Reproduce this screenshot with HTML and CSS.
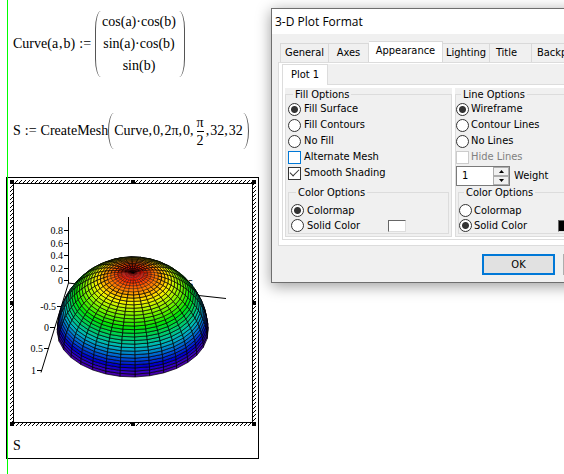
FILE: index.html
```html
<!DOCTYPE html>
<html lang="en">
<head>
<meta charset="utf-8">
<title>3-D Plot Format</title>
<link rel="stylesheet" href="styles.css">
</head>
<body>
<main class="sheet">
  <section class="math definition">
    <span>Curve(a<i class="sep">,</i>b)</span><span class="assign">:=</span>
    <span class="paren open"></span>
    <span class="vector"><span>cos(a)·cos(b)</span><span>sin(a)·cos(b)</span><span>sin(b)</span></span>
    <span class="paren close"></span>
  </section>
  <section class="math call">
    <span>S</span><span class="assign">:=</span><span class="name">CreateMesh</span>
    <span class="paren open"></span>
    <span class="args"><span>Curve</span><i class="sep">,</i><span>0</span><i class="sep">,</i><span>2π</span><i class="sep">,</i><span>0</span><i class="sep">,</i><span class="fraction"><span>π</span><span>2</span></span><i class="sep">,</i><span>32</span><i class="sep">,</i><span>32</span></span>
    <span class="paren close"></span>
  </section>
  <section class="plot">
    <div class="hatch">
      <svg class="chart" viewBox="14 184 238 238" role="img" aria-label="Surface plot of S">
        <g class="axes">
          <path d="M68.5 217V283L80 284.500M68.500 283L41 372.500M194 295L226 298.500"/>
          <path d="M64 230.500H68M64 243.500H68M64 255.500H68M64 268.500H68M64 280.500H68M57 306.500H61M50 327.500H55M44 348.500H49M37 370.500H42"/>
        </g>
        <g class="ticks">
          <text x="63" y="234">0.8</text><text x="63" y="247">0.6</text><text x="63" y="259">0.4</text><text x="63" y="272">0.2</text><text x="63" y="284">0</text>
          <text x="56" y="310">-0.5</text><text x="49" y="331">0</text><text x="43" y="352">0.5</text><text x="36" y="374">1</text><text x="193" y="287">5</text>
        </g>
        <g id="mesh" class="mesh"></g>
      </svg>
      <i class="handle tl"></i><i class="handle tc"></i><i class="handle tr"></i><i class="handle ml"></i><i class="handle mr"></i><i class="handle bl"></i><i class="handle bc"></i><i class="handle br"></i>
    </div>
    <div class="math caption">S</div>
  </section>
</main>

<section class="dialog" role="dialog" aria-labelledby="dialog-title">
  <h1 class="title" id="dialog-title">3-D Plot Format</h1>
  <nav class="tabs">
    <button class="tab general">General</button><button class="tab axes-tab">Axes</button><button class="tab active">Appearance</button><button class="tab lighting">Lighting</button><button class="tab title-tab">Title</button><button class="tab back">Backplanes</button>
  </nav>
  <div class="panel">
    <div class="subtabs"><button class="subtab">Plot 1</button></div>
    <form class="groups">
      <div class="card fill">
        <fieldset class="group">
          <legend>Fill Options</legend>
          <label class="option"><input type="radio" name="fill" checked>Fill Surface</label>
          <label class="option"><input type="radio" name="fill">Fill Contours</label>
          <label class="option"><input type="radio" name="fill">No Fill</label>
          <label class="option"><input type="checkbox" class="focus">Alternate Mesh</label>
          <label class="option"><input type="checkbox" checked>Smooth Shading</label>
          <fieldset class="group colors">
            <legend>Color Options</legend>
            <label class="option"><input type="radio" name="fillcolor" checked>Colormap</label>
            <div class="solid"><label class="option"><input type="radio" name="fillcolor">Solid Color</label><button type="button" class="swatch" aria-label="Fill color"></button></div>
          </fieldset>
        </fieldset>
      </div>
      <div class="card line">
        <fieldset class="group">
          <legend>Line Options</legend>
          <label class="option"><input type="radio" name="line" checked>Wireframe</label>
          <label class="option"><input type="radio" name="line">Contour Lines</label>
          <label class="option"><input type="radio" name="line">No Lines</label>
          <label class="option disabled"><input type="checkbox" disabled>Hide Lines</label>
          <div class="weight">
            <span class="spinner"><input type="text" id="weight" value="1"><span class="steps"><button type="button" aria-label="Increase"><svg viewBox="0 0 5 3"><path d="M0 3H5L2.500 0Z"/></svg></button><button type="button" aria-label="Decrease"><svg viewBox="0 0 5 3"><path d="M0 0H5L2.500 3Z"/></svg></button></span></span>
            <label for="weight">Weight</label>
          </div>
          <fieldset class="group colors">
            <legend>Color Options</legend>
            <label class="option"><input type="radio" name="linecolor">Colormap</label>
            <div class="solid"><label class="option"><input type="radio" name="linecolor" checked>Solid Color</label><button type="button" class="swatch black" aria-label="Line color"></button></div>
          </fieldset>
        </fieldset>
      </div>
    </form>
  </div>
  <footer class="actions"><button class="ok">OK</button><button class="cancel">Cancel</button></footer>
</section>
<script src="mesh.js"></script>
</body>
</html>
```
FILE: mesh.js
```js
// Tilted view of the hemisphere, 32 x 32 cells.
const steps = 32, radius = 75.5, cx = 132.7, cy = 331, tilt = 0.655, turn = 0.03, lift = 0.77;
const stops = [
  [0, 75, 0, 160], [0.06, 60, 0, 190], [0.17, 0, 0, 205], [0.3, 0, 95, 210],
  [0.43, 0, 185, 190], [0.55, 0, 205, 100], [0.65, 0, 225, 10], [0.74, 90, 240, 0],
  [0.83, 190, 245, 0], [0.88, 255, 240, 0], [0.93, 255, 160, 0], [0.97, 255, 85, 0], [1, 255, 0, 0]
];

function colorAt(z) {
  let i = 1;
  while (i < stops.length - 1 && stops[i][0] < z) i++;
  const a = stops[i - 1], b = stops[i], t = (z - a[0]) / (b[0] - a[0]);
  return "rgb(" + [1, 2, 3].map(k => Math.round(a[k] + (b[k] - a[k]) * t)).join(",") + ")";
}

function project(a, b) {
  const x = Math.sin(a) * Math.cos(b), y = Math.cos(a) * Math.cos(b), z = Math.sin(b);
  return [
    cx + radius * x,
    cy + radius * (y * Math.sin(tilt) - z * lift),
    y * Math.cos(tilt) + z * Math.sin(tilt)
  ];
}

const mesh = document.getElementById("mesh");
const da = 2 * Math.PI / steps, db = Math.PI / 2 / steps;
for (let j = 0; j < steps; j++) {
  for (let i = 0; i < steps; i++) {
    const a = i * da + turn, b = j * db;
    if (project(a + da / 2, b + db / 2)[2] < -0.03) continue;
    const corners = [[a, b], [a + da, b], [a + da, b + db], [a, b + db]].map(c => project(...c));
    const cell = document.createElementNS("http://www.w3.org/2000/svg", "polygon");
    cell.setAttribute("points", corners.map(p => p[0].toFixed(1) + "," + p[1].toFixed(1)).join(" "));
    cell.setAttribute("fill", colorAt(Math.sin(b + db / 2)));
    const back = Math.cos(a) < -0.3;
    if (j > 24 && !back) cell.setAttribute("stroke-width", j > 28 ? "0.25" : "0.4");
    mesh.append(cell);
  }
}
```
FILE: styles.css
```css
* { box-sizing: border-box; }
body {
  margin: 0;
  min-height: 100vh;
  display: flex;
  align-items: flex-start;
  overflow: hidden;
  background: #fff;
  color: #000;
  font: 11px/16px "DejaVu Sans Condensed", "DejaVu Sans", sans-serif;
}
button, input { font: inherit; color: inherit; margin: 0; padding: 0; }

.sheet {
  position: relative;
  flex: 0 0 271px;
  min-height: 100vh;
  padding: 11px 12px 0 6px;
}
.sheet::before {
  content: "";
  position: absolute;
  z-index: 1;
  left: 7px;
  top: 0;
  bottom: 0;
  width: 1px;
  background: #00ff00;
}
.math {
  display: flex;
  align-items: center;
  padding-left: 7px;
  font: 14px/22px "Liberation Serif", serif;
  white-space: nowrap;
}
.sep { font-style: normal; padding: 0 1px; }
.args .sep { padding-left: 0; }
.assign { margin: 0 4px; }
.vector { display: flex; flex-direction: column; align-items: center; padding: 0 3px 0 1px; }
.paren { width: 6px; align-self: stretch; border: 0 solid #555; }
.open { border-left-width: 1px; border-radius: 6px 0 0 6px / 18px 0 0 18px; }
.close { border-right-width: 1px; border-radius: 0 6px 6px 0 / 0 18px 18px 0; }
.call { height: 36px; margin: 36px 0 28px; }
.args { display: flex; align-items: center; }
.fraction { display: flex; flex-direction: column; line-height: 17px; text-align: center; padding: 0 2px; }
.fraction span + span { border-top: 1px solid #000; }

.plot { border: 1px solid #000; padding: 2px 2px 0 3px; }
.hatch {
  position: relative;
  padding: 3px;
  background: linear-gradient(to bottom right, #fff 0 43%, #000 43% 57%, #fff 57%) 0 0 / 4px 4px;
}
.chart { display: block; width: 100%; background: #fff; border: 1px solid #000; }
.handle { position: absolute; width: 4px; height: 4px; background: #000; }
.tl, .tc, .tr { top: 0; }
.bl, .bc, .br { bottom: 0; }
.ml, .mr { top: calc(50% - 2px); }
.tl, .ml, .bl { left: 0; }
.tr, .mr, .br { right: 0; }
.tc, .bc { left: calc(50% - 2px); }
.axes { fill: none; stroke: #000; }
.ticks { font: 10px "Liberation Serif", serif; text-anchor: end; }
.mesh { stroke: #000; stroke-width: 0.7; }
.caption { padding: 9px 0 1px 3px; }

.dialog {
  flex: 0 0 420px;
  border: 1px solid #6e6e6e;
  margin-top: 8px;
  background: #f0f0f0;
  box-shadow: 0 3px 14px rgba(0, 0, 0, 0.4);
}
.title {
  margin: 0;
  padding: 0 3px;
  background: #fff;
  font: 12px/25px "Open Sans", sans-serif;
}
.tabs { display: flex; align-items: flex-end; padding: 7px 0 0 8px; }
.tab {
  height: 19px;
  border: 1px solid #d9d9d9;
  border-width: 1px 1px 0 0;
  background: #f0f0f0;
}
.general { width: 49px; border-left-width: 1px; }
.axes-tab { width: 40px; }
.active { width: 74px; height: 21px; padding-bottom: 2px; background: #fff; }
.lighting { width: 47px; }
.title-tab { width: 42px; padding-right: 8px; }
.back { width: 70px; padding-left: 5px; text-align: left; }
.panel { margin-left: 6px; border: 1px solid #dcdcdc; background: #fff; padding: 1px 3px 5px; }
.subtabs { display: flex; background: #f0f0f0; border-bottom: 1px solid #dcdcdc; height: 21px; }
.subtab { width: 46px; height: 21px; border: 1px solid #dcdcdc; border-bottom: 0; background: #fff; }
.groups { display: flex; gap: 3px; padding: 3px 2px 2px; border: 1px solid #dcdcdc; border-top: 0; }
.card { width: 167px; background: #f0f0f0; }
.group { margin: 0; min-width: 0; border: 1px solid #dcdcdc; padding: 0 2px 2px; }
.card > .group { height: 149px; }
.line > .group { padding-left: 0; }
.group legend { margin-left: 5px; padding: 0 2px; line-height: 13px; }
.option { display: flex; align-items: center; gap: 3px; height: 16px; white-space: nowrap; }
.line .option { gap: 2px; }
.disabled { color: #808080; }
input[type="radio"], input[type="checkbox"] {
  appearance: none;
  flex: none;
  width: 13px;
  height: 13px;
  border: 1px solid #333;
  background: #fff;
}
input[type="radio"] { border-radius: 50%; }
input[type="radio"]:checked { background: radial-gradient(circle, #333 0 3px, #fff 4px); }
input[type="checkbox"]:checked { display: grid; place-items: center; }
input[type="checkbox"]:checked::before {
  content: "";
  width: 8px;
  height: 4px;
  margin-bottom: 3px;
  border: solid #333;
  border-width: 0 0 1px 1px;
  transform: rotate(-45deg);
}
input.focus { border-color: #0078d7; }
input:disabled { border-color: #ccc; }
.colors { padding: 4px 2px 0; }
.colors .option { height: 15px; }
.fill .colors { margin-top: 5px; }
.line .colors { padding-left: 0; margin-left: 2px; }
.solid { display: flex; align-items: center; justify-content: space-between; padding-right: 40px; }
.swatch { width: 18px; height: 12px; border: 1px solid #ddd; border-top-color: #666; border-left-color: #666; background: #fff; }
.black { background: #000; }
.weight { display: flex; align-items: center; gap: 4px; height: 21px; }
.spinner { display: flex; width: 54px; height: 20px; border: 1px solid #7a7a7a; background: #fff; }
.spinner input { width: 36px; border: 0; padding-left: 5px; background: #fff; }
.steps { display: flex; flex-direction: column; flex: 1; }
.steps button { flex: 1; display: grid; place-items: center; border: 1px solid #adadad; background: #f0f0f0; }
.steps svg { width: 5px; height: 3px; }
.actions { display: flex; gap: 8px; padding: 8px 0 7px 210px; }
.actions button { width: 73px; height: 21px; border: 1px solid #adadad; background: #e1e1e1; }
.actions .ok { border: 2px solid #0078d7; }
```
